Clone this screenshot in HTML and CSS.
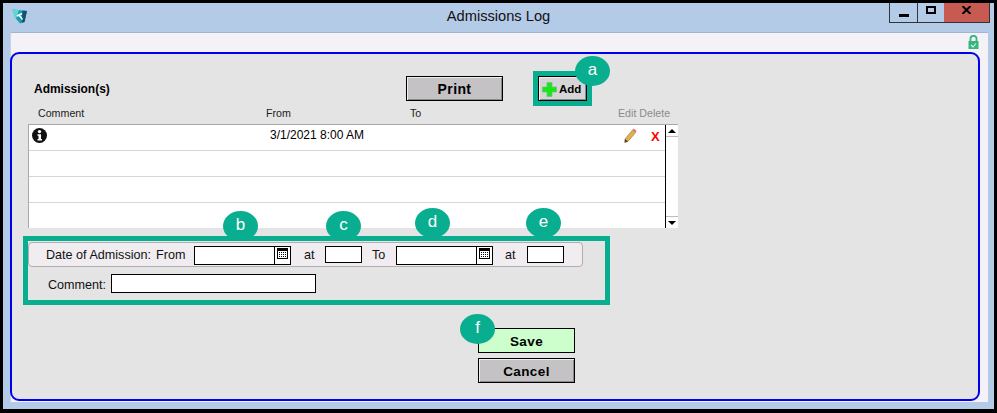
FILE: index.html
```html
<!DOCTYPE html>
<html lang="en">
<head>
<meta charset="utf-8">
<title>Admissions Log</title>
<link rel="stylesheet" href="styles.css">
</head>
<body>
<div class="window">
  <header class="titlebar">
    <svg class="app-icon" viewBox="0 0 16 15" width="16" height="15"><path d="M0.5 0.5 L15 2 L12.5 13 L8 14.5 L3 8.5 Z" fill="#1a9db0"/><path d="M0.5 0.5 L7 1.2 L4 9.7 L3 8.5 Z" fill="#58dcd2"/><path d="M10.5 1.5 L15 2 L12.5 13 L10 13.8 Z" fill="#17506f"/><path d="M5 7 L10 4.5 M7 6 L10.5 10.5" stroke="#fff" stroke-width="1.5" fill="none"/></svg>
    <h1 class="title">Admissions Log</h1>
    <div class="controls">
      <div class="ctl ctl-min"><span class="min-bar"></span></div>
      <div class="ctl ctl-max"><span class="max-box"></span></div>
      <div class="ctl ctl-close"><svg viewBox="0 0 9 8" width="9" height="8"><path d="M0.5 0 L8.5 8 M8.5 0 L0.5 8" stroke="#000" stroke-width="2"/></svg></div>
    </div>
  </header>
  <main class="content">
    <div class="lock-row">
      <svg viewBox="0 0 11 14" width="11" height="14"><path d="M2.5 6 V3.6 a3 2.8 0 0 1 6 0 V6" fill="none" stroke="#35b57f" stroke-width="1.8"/><rect x="0.5" y="6" width="10" height="8" fill="#35b57f"/><path d="M3 10 L5 12 L8 8.5" fill="none" stroke="#e6f6ef" stroke-width="1.1"/></svg>
    </div>
    <section class="panel">
      <div class="head-row">
        <div class="heading">Admission(s)</div>
        <button class="btn btn-print">Print</button>
        <button class="btn btn-add">
          <svg viewBox="0 0 15 15" width="15" height="15"><path d="M5 0.5 H10 V5 H14.5 V10 H10 V14.5 H5 V10 H0.5 V5 H5 Z" fill="#19e619" stroke="#6fc07a" stroke-width="0.7"/></svg>
          <span>Add</span>
        </button>
      </div>
      <div class="columns">
        <span class="col col-comment">Comment</span>
        <span class="col col-from">From</span>
        <span class="col col-to">To</span>
        <span class="col col-actions">Edit Delete</span>
      </div>
      <div class="grid">
        <div class="rows">
          <div class="row">
            <svg class="info" viewBox="0 0 15 15" width="15" height="15"><circle cx="7.5" cy="7.5" r="7.5" fill="#111"/><circle cx="7.5" cy="3.6" r="1.7" fill="#fff"/><path d="M5.5 6.2 H9 V11 H10 V12.6 H5.5 V11 H6.5 V7.8 H5.5 Z" fill="#fff"/></svg>
            <span class="cell-from">3/1/2021 8:00 AM</span>
            <svg class="pencil" viewBox="0 0 13 15" width="13" height="15"><path d="M1 11 L8.5 2 L11.5 4.5 L4 13.5 L0.8 14.4 Z" fill="#e0b050" stroke="#a8802e" stroke-width="0.7"/><path d="M8.5 2 L9.7 0.6 L12.6 3 L11.5 4.5 Z" fill="#d07a6a"/><path d="M1 11 L4 13.5 L0.8 14.4 Z" fill="#444"/></svg>
            <span class="del">X</span>
          </div>
          <div class="row"></div>
          <div class="row"></div>
          <div class="row row-last"></div>
        </div>
        <div class="scrollbar">
          <div class="sb-btn sb-up"><span class="tri-up"></span></div>
          <div class="sb-btn sb-down"><span class="tri-down"></span></div>
        </div>
      </div>
      <div class="date-bar">
        <label class="lbl lbl-date">Date of Admission:</label>
        <label class="lbl lbl-from">From</label>
        <div class="date-input"><span class="cal"><svg viewBox="0 0 11 11" width="11" height="11"><rect x="0.5" y="0.5" width="10" height="10" fill="#fff" stroke="#000"/><rect x="0.5" y="0.5" width="10" height="2.5" fill="#000"/><path d="M2 4.5 H9.5 M2 6.5 H9.5 M2 8.5 H9.5" stroke="#000" stroke-dasharray="1 1"/></svg></span></div>
        <label class="lbl lbl-at">at</label>
        <div class="time-input"></div>
        <label class="lbl lbl-to">To</label>
        <div class="date-input"><span class="cal"><svg viewBox="0 0 11 11" width="11" height="11"><rect x="0.5" y="0.5" width="10" height="10" fill="#fff" stroke="#000"/><rect x="0.5" y="0.5" width="10" height="2.5" fill="#000"/><path d="M2 4.5 H9.5 M2 6.5 H9.5 M2 8.5 H9.5" stroke="#000" stroke-dasharray="1 1"/></svg></span></div>
        <label class="lbl lbl-at2">at</label>
        <div class="time-input"></div>
      </div>
      <div class="comment-row">
        <label class="lbl">Comment:</label>
        <div class="comment-input"></div>
      </div>
      <div class="actions">
        <button class="btn btn-save">Save</button>
        <button class="btn btn-cancel">Cancel</button>
      </div>

      <div class="hl hl-add"></div>
      <div class="hl hl-form"></div>
      <div class="badge badge-a">a</div>
      <div class="badge badge-b">b</div>
      <div class="badge badge-c">c</div>
      <div class="badge badge-d">d</div>
      <div class="badge badge-e">e</div>
      <div class="badge badge-f">f</div>
    </section>
  </main>
</div>
</body>
</html>
```
FILE: styles.css
```css
* { box-sizing: border-box; }
html, body { margin: 0; padding: 0; }
body {
  width: 997px; height: 413px; background: #000; overflow: hidden;
  font-family: "Liberation Sans", Arial, sans-serif; color: #000;
}
.window {
  margin: 3px 3px 0 3px; width: 991px; height: 406px; background: #b4cbe8;
  display: flex; flex-direction: column;
}
.titlebar { height: 29px; flex: none; display: flex; align-items: flex-start; position: relative; }
.app-icon { margin: 6px 0 0 9px; }
.title {
  position: absolute; left: 0; right: 0; top: 5px; margin: 0; text-align: center;
  font-size: 14.67px; font-weight: normal; line-height: 17px; color: #111;
}
.controls {
  margin-left: auto; margin-right: 4px; display: flex; height: 20px;
  border: 1px solid #333; border-top: 0; position: relative;
}
.ctl { display: flex; align-items: center; justify-content: center; }
.ctl-min { width: 28px; border-right: 1px solid #333; align-items: flex-end; padding-bottom: 5px; }
.ctl-max { width: 26px; padding-bottom: 5px; }
.ctl-close { width: 45px; background: #c75b52; padding-bottom: 5px; }
.min-bar { width: 10px; height: 3px; background: #000; }
.max-box { width: 10px; height: 8px; border: 2px solid #000; }
.content {
  margin: 0 6px 0 7px; height: 370px; background: #f5f2f7; border-top: 1px solid #9fb6d4;
  border-left: 1px solid #c6d4e6;
}
.lock-row { height: 19px; display: flex; justify-content: flex-end; padding: 2px 9px 0 0; }
.panel {
  position: relative; width: 970px; margin-left: -1px; height: 349px; background: #e4e4e4;
  border: 2px solid #0000f0; border-radius: 9px;
}
.head-row { display: flex; align-items: flex-start; height: 49px; padding: 22px 0 0 22px; }
.heading { width: 372px; font-size: 12px; font-weight: bold; line-height: 14px; margin-top: 6px; letter-spacing: -0.02px; }
.btn {
  font-family: "Liberation Sans", Arial, sans-serif; font-weight: bold; font-size: 13.5px;
  width: 97px; height: 25px; border: 1px solid #000; padding: 1px 0 0; letter-spacing: 0.4px;
  background: #c4c2c4; color: #000;
  box-shadow: inset 1px 1px 0 #eee, inset -1px -1px 0 #8a888a;
  display: flex; align-items: center; justify-content: center;
}
.btn-print { font-size: 14px; }
.btn-add { width: 49px; margin-left: 35px; font-size: 11.5px; letter-spacing: 0; background: #d6d4d6; gap: 2px; justify-content: flex-start; padding-left: 3px; }
.columns { display: flex; height: 21px; font-size: 10.67px; line-height: 14px; color: #222; padding-top: 3px; }
.col { display: block; }
.col-comment { margin-left: 26px; width: 228px; }
.col-from { width: 144px; }
.col-to { width: 208px; }
.col-actions { color: #8b8b8b; }
.grid {
  margin-left: 16px; width: 650px; height: 104px; display: flex; background: #fff;
  border-top: 1px solid #a8a8a8; border-left: 1px solid #a8a8a8;
}
.rows { width: 636px; flex: none; }
.row { height: 26px; border-bottom: 1px solid #d6d6d6; display: flex; align-items: center; font-size: 12px; }
.row-last { border-bottom: 0; }
.info { margin: -5px 0 0 3px; }
.cell-from { margin-left: 223px; margin-top: -5px; }
.pencil { margin-left: 260px; margin-top: -4px; }
.del { margin-left: 14px; margin-top: -3px; color: #f00; font-size: 13px; font-weight: bold; }
.scrollbar {
  width: 13px; flex: none; border-left: 1px solid #000; display: flex; flex-direction: column;
  justify-content: space-between; background: #fff;
}
.sb-btn { height: 12px; display: flex; align-items: center; justify-content: center; background: #fff; }
.sb-up { border-bottom: 1px solid #bbb; }
.sb-down { border-top: 1px solid #bbb; }
.tri-up { border: 4px solid transparent; border-top: 0; border-bottom: 4px solid #000; }
.tri-down { border: 4px solid transparent; border-bottom: 0; border-top: 4px solid #000; }
.date-bar {
  margin: 14px 0 0 16px; width: 555px; height: 25px; background: #f0ecf0;
  border: 1px solid #b0aeb0; border-radius: 4px; display: flex; align-items: flex-start;
}
.lbl { font-size: 12.6px; line-height: 14px; color: #111; }
.date-bar .lbl { margin-top: 5px; }
.lbl-date { margin-left: 17px; width: 110px; }
.lbl-from { width: 38px; }
.date-input {
  width: 97px; height: 19px; margin-top: 3px; background: #fff; border: 1px solid #000;
  display: flex; justify-content: flex-end;
}
.cal { width: 16px; border-left: 1px solid #000; display: flex; justify-content: center; padding-top: 1px; }
.lbl-at { margin-left: 13px; width: 21px; }
.time-input { width: 37px; height: 17px; margin-top: 3px; background: #fff; border: 1px solid #000; }
.lbl-to { margin-left: 10px; width: 24px; }
.lbl-at2 { margin-left: 12px; width: 22px; }
.comment-row { display: flex; margin: 7px 0 0 36px; align-items: flex-start; }
.comment-row .lbl { margin-top: 4px; width: 63px; }
.comment-input { width: 205px; height: 19px; background: #fff; border: 1px solid #000; }
.actions { margin: 35px 0 0 466px; display: flex; flex-direction: column; gap: 5px; }
.btn-save { background: #ccffcc; box-shadow: none; }
.hl { position: absolute; border: 5px solid #08ae8f; }
.hl-add { left: 521px; top: 17px; width: 59px; height: 35px; }
.hl-form { left: 11px; top: 182px; width: 587px; height: 69px; }
.badge {
  position: absolute; width: 35px; height: 30px; border-radius: 50%; background: #08ae8f;
  color: #fff; font-size: 17px; line-height: 28px; text-align: center;
}
.badge-a { left: 563px; top: 2px; }
.badge-b { left: 211px; top: 157px; }
.badge-c { left: 314px; top: 157px; }
.badge-d { left: 403px; top: 154px; }
.badge-e { left: 514px; top: 154px; }
.badge-f { left: 448px; top: 260px; }
```
